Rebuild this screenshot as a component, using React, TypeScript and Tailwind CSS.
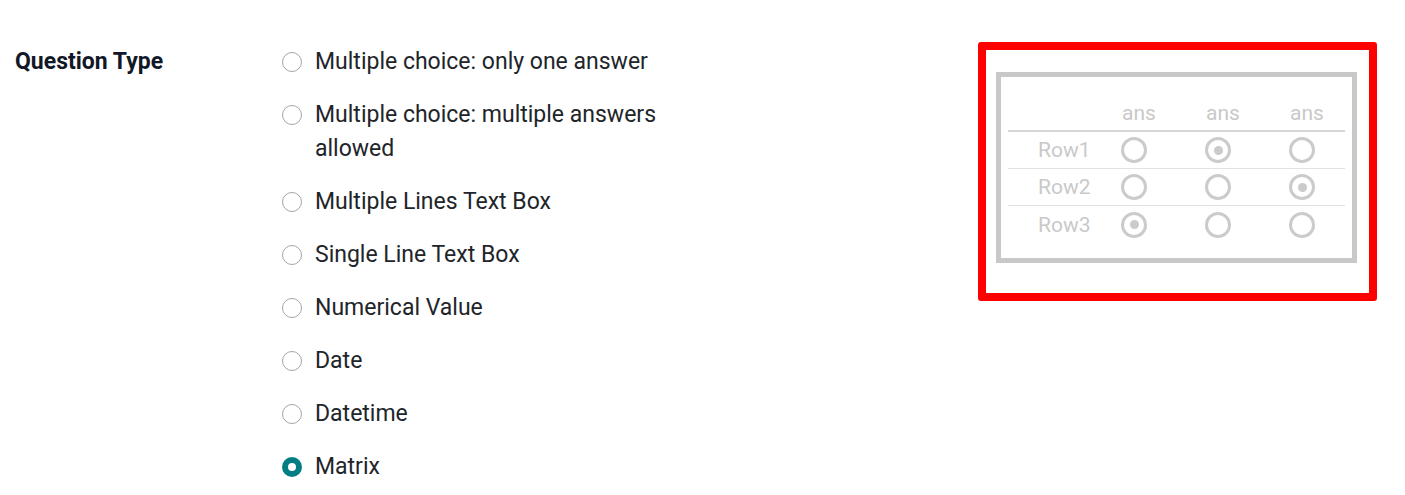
import React from "react";

const options = [
  "Multiple choice: only one answer",
  "Multiple choice: multiple answers allowed",
  "Multiple Lines Text Box",
  "Single Line Text Box",
  "Numerical Value",
  "Date",
  "Datetime",
  "Matrix",
];

function Radio({ checked }: { checked: boolean }) {
  if (checked) {
    return (
      <span className="mt-[7px] block h-[20px] w-[20px] shrink-0 rounded-full border-[6px] border-[#017e84] bg-white" />
    );
  }
  return (
    <span className="mt-[7px] block h-[20px] w-[20px] shrink-0 rounded-full border-[1.5px] border-[#a3a6aa] bg-white" />
  );
}

function MRadio({ on }: { on: boolean }) {
  return (
    <span className="flex h-[26px] w-[26px] items-center justify-center rounded-full border-[3px] border-[#cbcbcb]">
      {on && <span className="block h-[9px] w-[9px] rounded-full bg-[#cbcbcb]" />}
    </span>
  );
}

const matrix = [
  ["Row1", [false, true, false]],
  ["Row2", [false, false, true]],
  ["Row3", [true, false, false]],
] as const;

export default function App() {
  return (
    <div
      className="flex h-[495px] w-[1405px] bg-white pl-[15px] text-[#212529]"
      style={{ fontFamily: "Roboto, 'Liberation Sans', sans-serif" }}
    >
      <div className="w-[267px] shrink-0 pt-[45px] text-[23px] font-bold leading-[34px] text-[#111827]">
        Question Type
      </div>
      <div className="flex w-[696px] shrink-0 flex-col gap-[19px] pt-[45px]">
        {options.map((o, i) => (
          <div key={o} className="flex items-start gap-[13px]">
            <Radio checked={i === options.length - 1} />
            <span className="w-[375px] text-[23px] leading-[34px]">{o}</span>
          </div>
        ))}
      </div>
      <div className="mt-[42px] h-[259px] w-[399px] shrink-0 rounded-[3px] border-[8px] border-[#ff0000] pl-[10px] pt-[22px]">
        <div className="h-[191px] w-[361px] border-[5px] border-[#c8c8c8] px-[7px] text-[21px] text-[#c9c9c9]">
          <div className="grid h-[55px] grid-cols-[84px_84px_84px_84px] items-end border-b-2 border-[#d6d6d6] pb-[5px] leading-[24px]">
            <span />
            <span className="pl-[10px] text-center">ans</span>
            <span className="pl-[10px] text-center">ans</span>
            <span className="pl-[10px] text-center">ans</span>
          </div>
          {matrix.map(([label, vals], r) => (
            <div
              key={label}
              className={`grid h-[37px] grid-cols-[84px_84px_84px_84px] items-center leading-[24px] ${
                r < 2 ? "border-b border-[#e2e2e2]" : ""
              }`}
            >
              <span className="pl-[30px]">{label}</span>
              {vals.map((v, c) => (
                <span key={c} className="flex justify-center">
                  <MRadio on={v} />
                </span>
              ))}
            </div>
          ))}
        </div>
      </div>
    </div>
  );
}
